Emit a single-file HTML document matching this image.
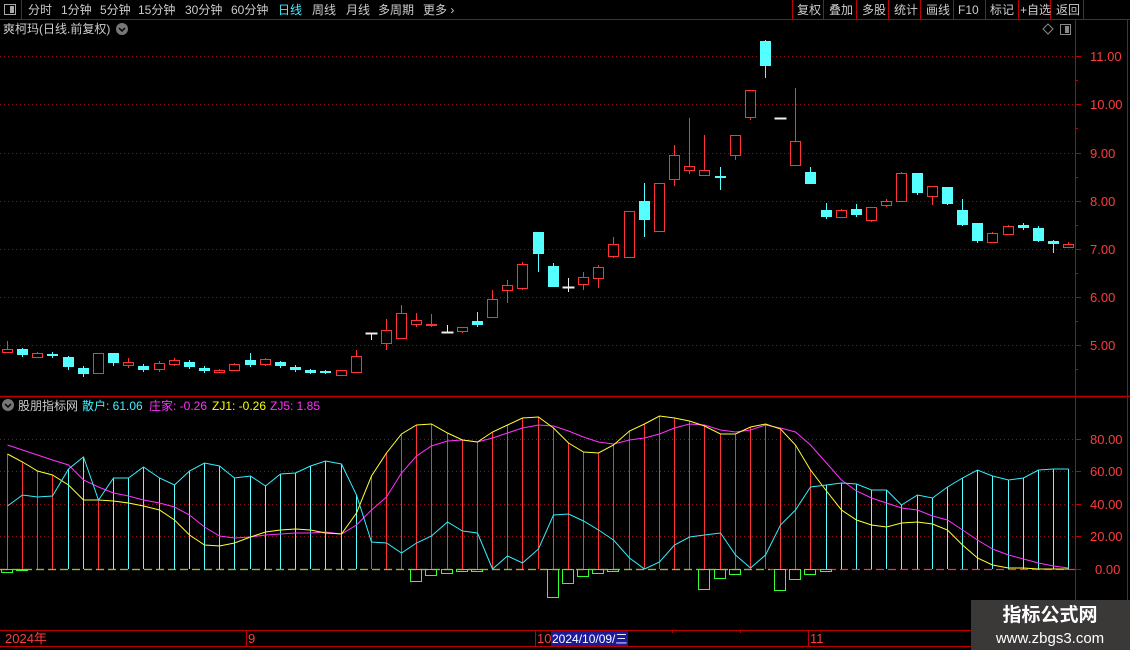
<!DOCTYPE html>
<html><head><meta charset="utf-8">
<style>
html,body{margin:0;padding:0;background:#000;width:1130px;height:650px;overflow:hidden;font-family:"Liberation Sans","Noto Sans CJK SC",sans-serif}
svg{display:block}
</style></head><body>
<svg id="s" width="1130" height="650" xmlns="http://www.w3.org/2000/svg" font-family="Liberation Sans, Noto Sans CJK SC, sans-serif"></svg>
<script>
(function(){
var s=document.getElementById('s');var h='';
function L(x1,y1,x2,y2,c,w,d){h+='<line x1="'+x1+'" y1="'+y1+'" x2="'+x2+'" y2="'+y2+'" stroke="'+c+'" stroke-width="'+(w||1)+'"'+(d?' stroke-dasharray="'+d+'"':'')+'/>';}
function R(x,y,w,hh,f,st){h+='<rect x="'+x+'" y="'+y+'" width="'+w+'" height="'+hh+'" fill="'+(f||'none')+'"'+(st?' stroke="'+st+'"':'')+'/>';}
function T(x,y,t,c,sz,extra){h+='<text x="'+x+'" y="'+y+'" fill="'+c+'" font-size="'+(sz||12)+'" '+(extra||'')+'>'+t+'</text>';}
var RED='#c00000';
L(0,19.5,1130,19.5,RED,1);
L(21.5,0,21.5,19,RED,1);
R(4.5,4.5,11,10,'none','#aaa');R(10,6,4,7,'#aaa');
var tb=[['分时',28],['1分钟',61],['5分钟',100],['15分钟',138],['30分钟',185],['60分钟',231],['日线',278,'#4ef'],['周线',312],['月线',346],['多周期',378],['更多 ›',423]];
tb.forEach(function(a){T(a[1],14,a[0],a[2]||'#ccc',12);});
var rb=[['复权',797],['叠加',829],['多股',862],['统计',894],['画线',926],['F10',958],['标记',990],['+自选',1020],['返回',1056]];
[792,823,856,888,920,953,985,1018,1050,1083].forEach(function(x){L(x+.5,0,x+.5,19,RED,1);});
rb.forEach(function(a){T(a[1],14,a[0],'#ccc',12);});
T(3,33,'爽柯玛(日线.前复权)','#ccc',12);
h+='<circle cx="122" cy="29" r="6" fill="#777"/><path d="M119 28 L122 31 L125 28" stroke="#000" stroke-width="1.5" fill="none"/>';
h+='<path d="M1048 24 L1053 29 L1048 34 L1043 29 Z" fill="none" stroke="#888"/>';
R(1060.5,24.5,10,10,'none','#888');R(1065,26,4,7,'#888');
L(1075.5,19,1075.5,646,RED,1);L(1127.5,19,1127.5,646,RED,1);
L(0,396.5,1130,396.5,RED,1.5);
L(0,630.5,1130,630.5,RED,1);L(0,646.5,1130,646.5,RED,1);
var pl=[[11,56],[10,104],[9,153],[8,201],[7,249],[6,297],[5,345]];
pl.forEach(function(p){L(0,p[1]+.5,1075,p[1]+.5,'#8a1010',1,'1 3');L(1075,p[1]+.5,1081,p[1]+.5,RED,1);T(1090,p[1]+5,p[0].toFixed(2),'#ff3b3b',13);});
[80,128,177,225,273,321,369].forEach(function(y){L(1075,y+.5,1078,y+.5,RED,1);});
var C=[[349,352,341,353,'r'],[349,355,348,357,'c'],[353,357,352,358,'r'],[354,355,352,358,'c'],[357,367,356,370,'c'],[368,374,366,377,'c'],[353,373,353,373,'r'],[353,363,353,366,'c'],[362,365,358,368,'r'],[366,370,364,372,'c'],[363,369,361,372,'r'],[360,364,358,366,'r'],[362,367,360,369,'c'],[368,371,366,373,'c'],[370,372,369,373,'r'],[364,370,363,371,'r'],[360,365,353,367,'c'],[359,364,358,366,'r'],[362,366,361,368,'c'],[367,370,365,372,'c'],[370,373,369,374,'c'],[371,373,370,374,'c'],[370,375,370,375,'r'],[356,372,350,372,'r'],[333,333,333,340,'w'],[330,343,319,350,'r'],[313,338,305,338,'r'],[320,324,313,327,'r'],[324,325,314,327,'r'],[332,332,325,332,'w'],[327,331,327,333,'r'],[321,325,312,327,'c'],[299,317,290,317,'r'],[285,290,280,303,'r'],[264,288,262,290,'r'],[232,254,232,272,'c'],[266,287,263,287,'c'],[287,287,278,292,'w'],[277,284,272,290,'r'],[267,278,265,288,'r'],[244,256,237,258,'r'],[211,257,211,257,'r'],[201,220,183,237,'c'],[183,231,183,231,'r'],[155,179,145,186,'r'],[166,170,118,174,'r'],[170,175,135,175,'r'],[176,176,167,190,'c'],[135,155,135,160,'r'],[90,117,90,120,'r'],[41,66,40,78,'c'],[118,118,118,119,'w'],[141,165,88,165,'r'],[172,184,167,184,'c'],[210,217,203,219,'c'],[210,217,209,218,'r'],[209,215,204,217,'c'],[207,220,207,222,'r'],[201,205,199,207,'r'],[173,201,172,201,'r'],[173,193,173,195,'c'],[186,196,186,205,'r'],[187,204,187,205,'c'],[210,225,199,226,'c'],[223,241,223,243,'c'],[233,242,232,243,'r'],[226,234,225,235,'r'],[225,228,223,230,'c'],[228,241,226,242,'c'],[241,244,240,253,'c'],[244,247,242,248,'r']];
function X(i){return Math.round(7+15.16*i);}
C.forEach(function(c,i){var x=X(i)+.5;var col=c[4]=='r'?'#ff3333':c[4]=='c'?'#55ffff':'#eee';
 L(x,c[2],x,c[3],col,1);
 if(c[4]=='w'){L(x-6,c[0]+.5,x+6,c[0]+.5,col,2);}
 else if(c[4]=='c'){R(x-5.5,c[0],11,Math.max(2,c[1]-c[0]),col);}
 else{R(x-5,c[0]+.5,10,Math.max(1,c[1]-c[0]),'#000',col);}
});
h+='<circle cx="8" cy="405" r="6" fill="#777"/><path d="M5 404 L8 407 L11 404" stroke="#000" stroke-width="1.5" fill="none"/>';
T(18,410,'股朋指标网','#ccc',12);
T(82,410,'散户: 61.06','#4ef',12);T(149,410,'庄家: -0.26','#f3f',12);T(212,410,'ZJ1: -0.26','#ff0',12);T(270,410,'ZJ5: 1.85','#f3f',12);
var il=[[80,439],[60,471],[40,504],[20,536]];
il.forEach(function(p){L(0,p[1]+.5,1075,p[1]+.5,'#8a1010',1,'1 3');L(1075,p[1]+.5,1081,p[1]+.5,RED,1);T(1090,p[1]+5,p[0].toFixed(2),'#ff3b3b',13);});
T(1095,574,'0.00','#ff3b3b',13);L(1075,569.5,1081,569.5,RED,1);
var CY=[506,495,497,496,469,457,500,478,478,467,478,485,471,463,466,478,476,486,474,473,466,461,464,495,542,543,553,543,536,522,531,533,569,556,563,549,515,514,521,530,540,558,569,562,545,537,535,533,555,568,555,525,510,487,485,483,484,490,490,505,495,498,487,478,470,476,480,478,470,469,469];
var YY=[454,462,471,475,485,500,500,501,503,506,510,520,535,545,546,543,537,532,530,529,530,533,534,513,476,453,434,425,424,433,440,442,432,425,418,417,428,443,452,453,445,431,424,416,418,421,426,434,434,427,424,429,445,470,491,510,520,525,527,523,522,524,530,545,558,565,568,568,569,569,569];
var MM=[445,450,455,460,465,480,487,493,496,500,503,507,515,527,536,538,537,535,534,533,533,532,534,525,510,497,473,456,446,441,440,442,438,433,428,425,426,431,437,442,444,440,438,434,428,424,425,430,432,430,425,428,432,445,463,480,491,498,503,508,510,516,520,530,540,549,555,559,563,566,568];
L(0,569.5,1075,569.5,'#ff3333',1.2,'8 4');
L(0,569.5,770,569.5,'#33ee33',1.2,'8 4');
for(var i=0;i<71;i++){var x=X(i)+.5;var cy=CY[i]<YY[i];var tp=Math.min(CY[i],YY[i]);if(tp<569)L(x,569,x,tp,cy?'#55ffff':'#ff3333',1);}
function P(a,col){var d='';a.forEach(function(v,i){d+=(i?'L':'M')+(X(i)+.5)+' '+v;});h+='<path d="'+d+'" fill="none" stroke="'+col+'" stroke-width="1"/>';}
P(MM,'#ff33ff');P(YY,'#ffff33');P(CY,'#33eeff');
var B=[[0,572],[1,570],[27,581],[28,575],[29,573],[30,571],[31,571],[36,597],[37,583],[38,576],[39,573],[40,571],[46,589],[47,578],[48,574],[51,590],[52,579],[53,574],[54,571]];
B.forEach(function(b){var x=X(b[0]);R(x-5.5,569.5,11,b[1]-569,'none','#33ff33');});
T(5,643,'2024年','#ff3b3b',13);L(246.5,630,246.5,646,RED,1);T(248,643,'9','#ff3b3b',13);
L(535.5,630,535.5,646,RED,1);T(537,643,'10','#ff3b3b',13);
R(551,631,77,15,'#1a1a9a');T(552,643,'2024/10/09/三','#fff',12);
L(808.5,630,808.5,646,RED,1);T(810,643,'11','#ff3b3b',13);
[672,740].forEach(function(x){L(x+.5,630,x+.5,633,RED,1);});
R(971,600,159,50,'#3b3838');
T(1050,621,'指标公式网','#fff',19,'text-anchor="middle" font-weight="bold"');
T(1050,643,'www.zbgs3.com','#fff',15,'text-anchor="middle"');
s.innerHTML=h;
})();
</script>
</body></html>
